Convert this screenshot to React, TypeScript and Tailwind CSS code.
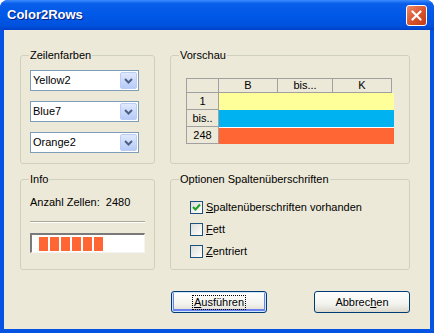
import React from "react";

const font = "font-['Liberation_Sans','DejaVu_Sans',sans-serif]";

const Chevron: React.FC = () => (
  <svg width="9" height="6" viewBox="0 0 9 6">
    <path d="M1 1 L4.5 4.5 L8 1" fill="none" stroke="#4d6185" strokeWidth="2" />
  </svg>
);

const Combo: React.FC<{ value: string }> = ({ value }) => (
  <div className="flex h-[21px] items-center justify-between border border-[#7f9db9] bg-white pl-[2px] pr-[1px]">
    <span className="text-[11px] leading-[13px]">{value}</span>
    <div className="flex h-[17px] w-[17px] items-center justify-center rounded-[2px] border border-[#b9cdf5] bg-[linear-gradient(to_bottom,#e0e9fd,#b6cbf8)]">
      <Chevron />
    </div>
  </div>
);

const GroupBox: React.FC<{ title: string; className?: string; children: React.ReactNode }> = ({
  title,
  className,
  children,
}) => (
  <fieldset className={`rounded-[3px] border border-[#d0d0bf] ${className ?? ""}`}>
    <legend className="ml-[8px] px-[1px] text-[11px] leading-[13px]">{title}</legend>
    {children}
  </fieldset>
);

const CheckBox: React.FC<{ checked?: boolean; label: React.ReactNode }> = ({ checked, label }) => (
  <div className="flex items-center">
    <div className="flex h-[13px] w-[13px] items-center justify-center border border-[#1c5180] bg-[linear-gradient(135deg,#dcdcd7,#ffffff)]">
      {checked && (
        <svg width="9" height="9" viewBox="0 0 9 9">
          <path d="M1 4 L3.5 6.5 L8 1.5" fill="none" stroke="#21a121" strokeWidth="2" />
        </svg>
      )}
    </div>
    <span className="ml-[3px] text-[11px] leading-[13px]">{label}</span>
  </div>
);

const colors = ["bg-[#ffff99]", "bg-[#00b2f0]", "bg-[#ff6633]"];

export default function App() {
  return (
    <div className={`${font} flex h-[333px] w-[434px] flex-col overflow-hidden rounded-t-[8px] bg-[#0553e2] text-black`}>
      {/* Titelleiste */}
      <div className="flex h-[30px] items-center justify-between bg-[linear-gradient(to_bottom,#3c8cfe_0%,#0a5fea_12%,#0058e7_50%,#0052de_86%,#0040c8_100%)] pl-[7px] pr-[7px]">
        <span className="text-[13px] font-bold leading-[16px] text-white [text-shadow:1px_1px_0_#0a1f80]">
          Color2Rows
        </span>
        <div className="flex h-[21px] w-[21px] items-center justify-center rounded-[3px] border border-white bg-[linear-gradient(135deg,#ec8a68,#d8522c_55%,#c23c16)]">
          <svg width="11" height="11" viewBox="0 0 11 11">
            <path d="M1.5 1.5 L9.5 9.5 M9.5 1.5 L1.5 9.5" stroke="white" strokeWidth="2.2" strokeLinecap="round" />
          </svg>
        </div>
      </div>

      {/* Client */}
      <div className="mx-[4px] mb-[4px] flex-1 bg-[#ece9d8] pl-[16px] pt-[19px]">
        <div className="grid grid-cols-[135px_240px] gap-x-[15px] gap-y-[9px]">
          <GroupBox title="Zeilenfarben">
            <div className="flex flex-col gap-[10px] pb-[10px] pl-[9px] pr-[15px] pt-[8px]">
              <Combo value="Yellow2" />
              <Combo value="Blue7" />
              <Combo value="Orange2" />
            </div>
          </GroupBox>

          <GroupBox title="Vorschau">
            <div className="pl-[15px] pt-[16px] text-[11px] leading-[13px]">
              <div className="flex">
                <div className="h-[15px] w-[33px] border border-[#a0a0a0] bg-[#ece9d8]" />
                {[
                  { t: "B", w: "w-[59px]" },
                  { t: "bis...", w: "w-[55px]" },
                  { t: "K", w: "w-[59px]" },
                ].map((c) => (
                  <div
                    key={c.t}
                    className={`flex h-[15px] ${c.w} items-center justify-center border border-l-0 border-[#a0a0a0] bg-[#ece9d8]`}
                  >
                    {c.t}
                  </div>
                ))}
              </div>
              {["1", "bis..", "248"].map((r, i) => (
                <div key={r} className="flex">
                  <div className="flex h-[17px] w-[33px] items-center justify-center border border-t-0 border-[#a0a0a0] bg-[#ece9d8]">
                    {r}
                  </div>
                  <div className={`h-[17px] w-[175px] ${colors[i]} ${i === 2 ? "border-t border-white" : ""}`} />
                </div>
              ))}
            </div>
          </GroupBox>

          <GroupBox title="Info">
            <div className="flex flex-col px-[9px] pb-[16px] pt-[10px] text-[11px] leading-[13px]">
              <span>Anzahl Zellen:&nbsp; 2480</span>
              <div className="mt-[12px] border-b border-t border-b-white border-t-[#aca899]" />
              <div className="mt-[10px] flex h-[20px] gap-[2px] border-b border-l-2 border-r border-t-2 border-b-[#f4f4f4] border-l-[#7a7a7a] border-r-[#f4f4f4] border-t-[#7a7a7a] bg-white pl-[7px] pt-[2px]">
                {[0, 1, 2, 3, 4, 5].map((b) => (
                  <div key={b} className="h-[14px] w-[9px] bg-[#ff6633]" />
                ))}
              </div>
            </div>
          </GroupBox>

          <GroupBox title="Optionen Spaltenüberschriften">
            <div className="flex flex-col gap-[9px] pb-[11px] pl-[19px] pt-[15px]">
              <CheckBox
                checked
                label={
                  <>
                    <u>S</u>paltenüberschriften vorhanden
                  </>
                }
              />
              <CheckBox
                label={
                  <>
                    <u>F</u>ett
                  </>
                }
              />
              <CheckBox
                label={
                  <>
                    <u>Z</u>entriert
                  </>
                }
              />
            </div>
          </GroupBox>

          <div />
          <div className="mt-[12px] flex justify-between pl-[1px]">
            <button className="flex h-[22px] w-[96px] items-center justify-center rounded-[3px] border border-[#003c74] bg-[linear-gradient(to_bottom,#ffffff,#f3f3ef_60%,#dcd8cc)] text-[11px] leading-[13px] shadow-[inset_0_0_0_1px_#cee7ff,inset_0_-1px_0_2px_#6982ee]">
              <span className="px-[1px] outline outline-1 outline-dotted outline-black">
                <u>A</u>usführen
              </span>
            </button>
            <button className="flex h-[22px] w-[96px] items-center justify-center rounded-[3px] border border-[#003c74] bg-[linear-gradient(to_bottom,#ffffff,#f3f3ef_60%,#dcd8cc)] text-[11px] leading-[13px]">
              <span>
                Abbrec<u>h</u>en
              </span>
            </button>
          </div>
        </div>
      </div>
    </div>
  );
}
